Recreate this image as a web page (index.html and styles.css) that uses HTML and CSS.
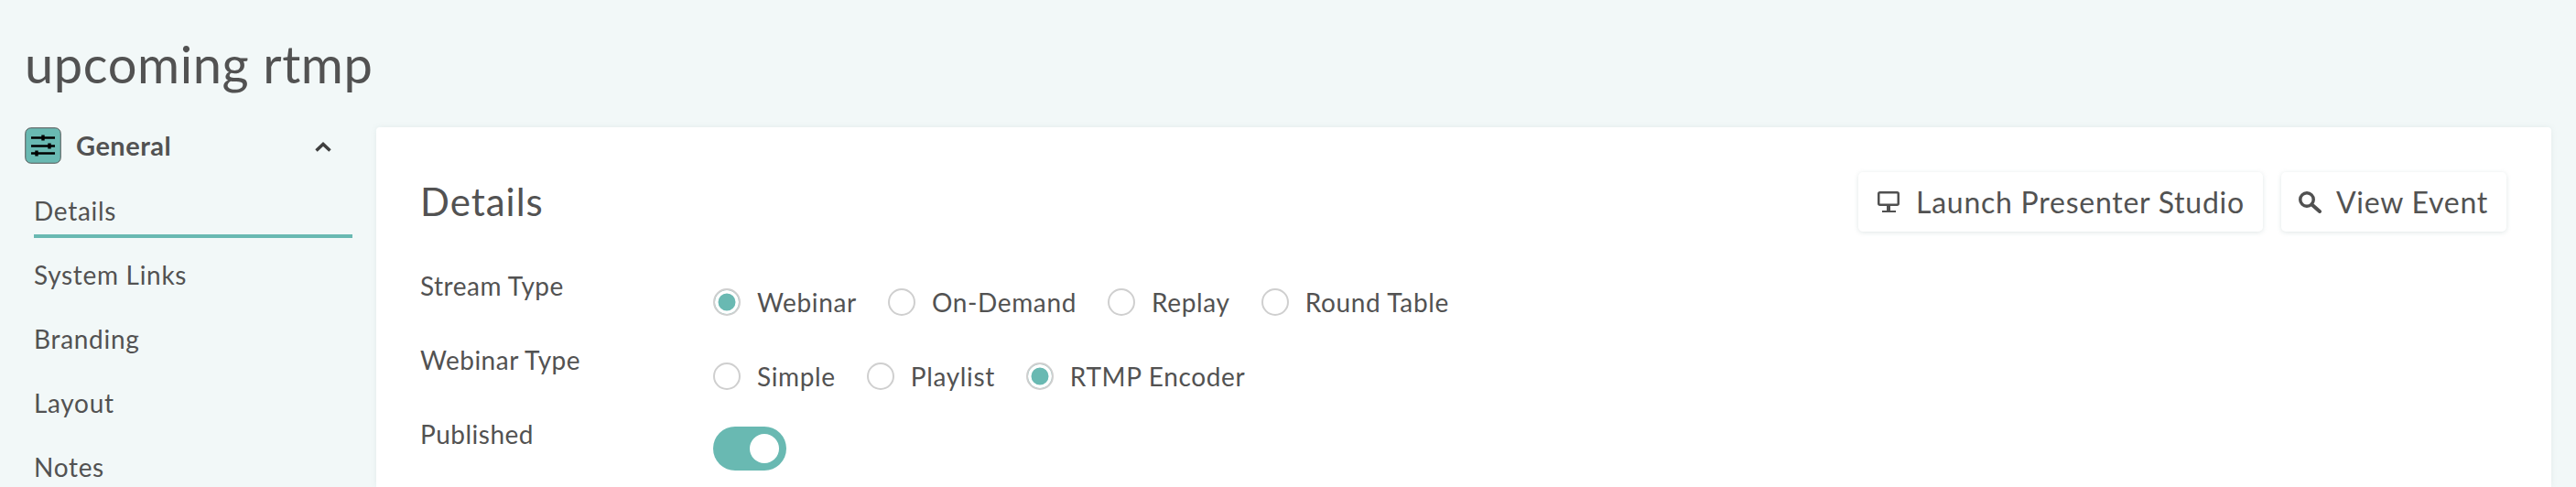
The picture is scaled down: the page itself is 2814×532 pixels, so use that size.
FILE: index.html
```html
<!DOCTYPE html>
<html lang="en">
<head>
<meta charset="utf-8">
<title>upcoming rtmp</title>
<link rel="stylesheet" href="styles.css">
</head>
<body>
<h1 class="page-title">upcoming rtmp</h1>
<div class="layout">
  <nav class="sidebar">
    <div class="section-head">
      <svg class="section-icon" viewBox="0 0 40 40" aria-hidden="true">
        <rect x="0.75" y="0.75" width="38.5" height="38.5" rx="6" fill="#69b9b2" stroke="#555"/>
        <path d="M7 11.500H33M7 20.500H33M7 28.500H33" stroke="#000" stroke-width="2.400" fill="none"/>
        <path d="M20 8.500v6M27 17.500v6M13 25.500v6" stroke="#000" stroke-width="3.400" fill="none"/>
      </svg>
      <span class="section-name">General</span>
      <svg class="chevron" viewBox="0 0 18 11" aria-hidden="true"><path d="M1.500 9.500L9 2.500l7.500 7" fill="none" stroke="#3f3f3f" stroke-width="3.500"/></svg>
    </div>
    <a class="nav-item active">Details</a>
    <a class="nav-item">System Links</a>
    <a class="nav-item">Branding</a>
    <a class="nav-item">Layout</a>
    <a class="nav-item">Notes</a>
  </nav>
  <main class="card">
    <header class="card-head">
      <h2 class="card-title">Details</h2>
      <div class="actions">
        <button class="btn">
          <svg class="icon-monitor" viewBox="0 0 24 23" aria-hidden="true"><rect x="1.250" y="1.250" width="21.500" height="13.500" rx="1.500" fill="none" stroke="#505050" stroke-width="2.500"/><path d="M10 16h4v5h-4z" fill="#505050"/><path d="M5 21h15v2H5z" fill="#505050"/></svg>
          Launch Presenter Studio
        </button>
        <button class="btn">
          <svg class="icon-search" viewBox="0 0 25 24" aria-hidden="true"><circle cx="9" cy="9" r="7.250" fill="none" stroke="#505050" stroke-width="3.500"/><path d="M14.500 14.500L23 22" stroke="#505050" stroke-width="4" stroke-linecap="round"/></svg>
          View Event
        </button>
      </div>
    </header>
    <div class="form">
      <div class="field-label">Stream Type</div>
      <div class="radios">
        <label class="radio"><span class="dot on"></span>Webinar</label>
        <label class="radio"><span class="dot"></span>On-Demand</label>
        <label class="radio"><span class="dot"></span>Replay</label>
        <label class="radio"><span class="dot"></span>Round Table</label>
      </div>
      <div class="field-label">Webinar Type</div>
      <div class="radios">
        <label class="radio"><span class="dot"></span>Simple</label>
        <label class="radio"><span class="dot"></span>Playlist</label>
        <label class="radio"><span class="dot on"></span>RTMP Encoder</label>
      </div>
      <div class="field-label">Published</div>
      <div class="toggle"><span class="knob"></span></div>
    </div>
  </main>
</div>
</body>
</html>
```
FILE: styles.css
```css
* { box-sizing: border-box; }
html, body { height: 100%; }
body {
  margin: 0;
  height: 532px;
  overflow: hidden;
  background: #f2f8f8;
  color: #525252;
  font-family: Lato, sans-serif;
}
.page-title {
  margin: 0;
  padding: 33px 0 0 27px;
  height: 139px;
  font-size: 56px;
  line-height: 74px;
  font-weight: 400;
  letter-spacing: 0.6px;
}
.layout { display: flex; align-items: flex-start; }
.sidebar { width: 411px; flex: none; padding-left: 27px; }
.section-head { display: flex; align-items: center; height: 40px; position: relative; }
.section-icon { width: 40px; height: 40px; flex: none; }
.section-name { margin-left: 16px; margin-top: -1px; font-size: 29px; font-weight: 700; letter-spacing: 0.5px; }
.chevron { width: 18px; height: 11px; margin-left: auto; margin-right: 49px; margin-top: 2px; }
.nav-item { display: block; width: 348px; margin-left: 10px; height: 70px; font-size: 28px; line-height: 36px; padding: 26px 0 0 0; letter-spacing: 0.7px; }
.nav-item.active { margin-top: 30px; margin-bottom: -4px; height: 51px; padding-top: 3px; border-bottom: 4px solid #69b9b2; }
.card {
  flex: 1;
  height: 393px;
  margin-right: 27px;
  background: #fff;
  border-radius: 4px 4px 0 0;
  box-shadow: 0 0 6px rgba(120, 150, 150, 0.12);
  padding: 49px 49px 0 48px;
}
.card-head { display: flex; justify-content: space-between; align-items: flex-start; }
.card-title { margin: 0; font-size: 42px; font-weight: 400; line-height: 52px; padding-top: 6px; letter-spacing: 1px; }
.actions { display: flex; gap: 20px; }
.btn {
  display: flex;
  align-items: center;
  height: 65px;
  padding: 0 20px 0 21px;
  background: #fff;
  border: 0;
  border-radius: 5px;
  box-shadow: 0 1px 5px rgba(110, 140, 140, 0.22);
  color: #525252;
  font: 400 32px Lato, sans-serif;
  letter-spacing: 0.75px;
}
.icon-monitor { width: 24px; height: 23px; flex: none; margin-right: 18px; }
.icon-search { width: 25px; height: 24px; flex: none; margin-left: -2px; margin-right: 16px; }
.form {
  display: grid;
  grid-template-columns: 320px 1fr;
  grid-auto-rows: 81px;
  margin-top: 41px;
}
.field-label { font-size: 28px; line-height: 36px; letter-spacing: 0.5px; }
.radios { display: flex; gap: 34px; padding-top: 18px; }
.radio { display: flex; align-items: center; gap: 18px; height: 36px; font-size: 28px; letter-spacing: 0.65px; }
.dot {
  width: 30px;
  height: 30px;
  border: 2px solid #cfcfcf;
  border-radius: 50%;
  background: #fff;
  flex: none;
}
.dot.on { background: #69b9b2; box-shadow: inset 0 0 0 3.500px #fff; }
.toggle {
  display: flex;
  justify-content: flex-end;
  align-items: center;
  width: 80px;
  height: 48px;
  margin-top: 10px;
  padding-right: 8px;
  border-radius: 24px;
  background: #69b9b2;
}
.knob { width: 32px; height: 32px; border-radius: 50%; background: #fff; }
```
